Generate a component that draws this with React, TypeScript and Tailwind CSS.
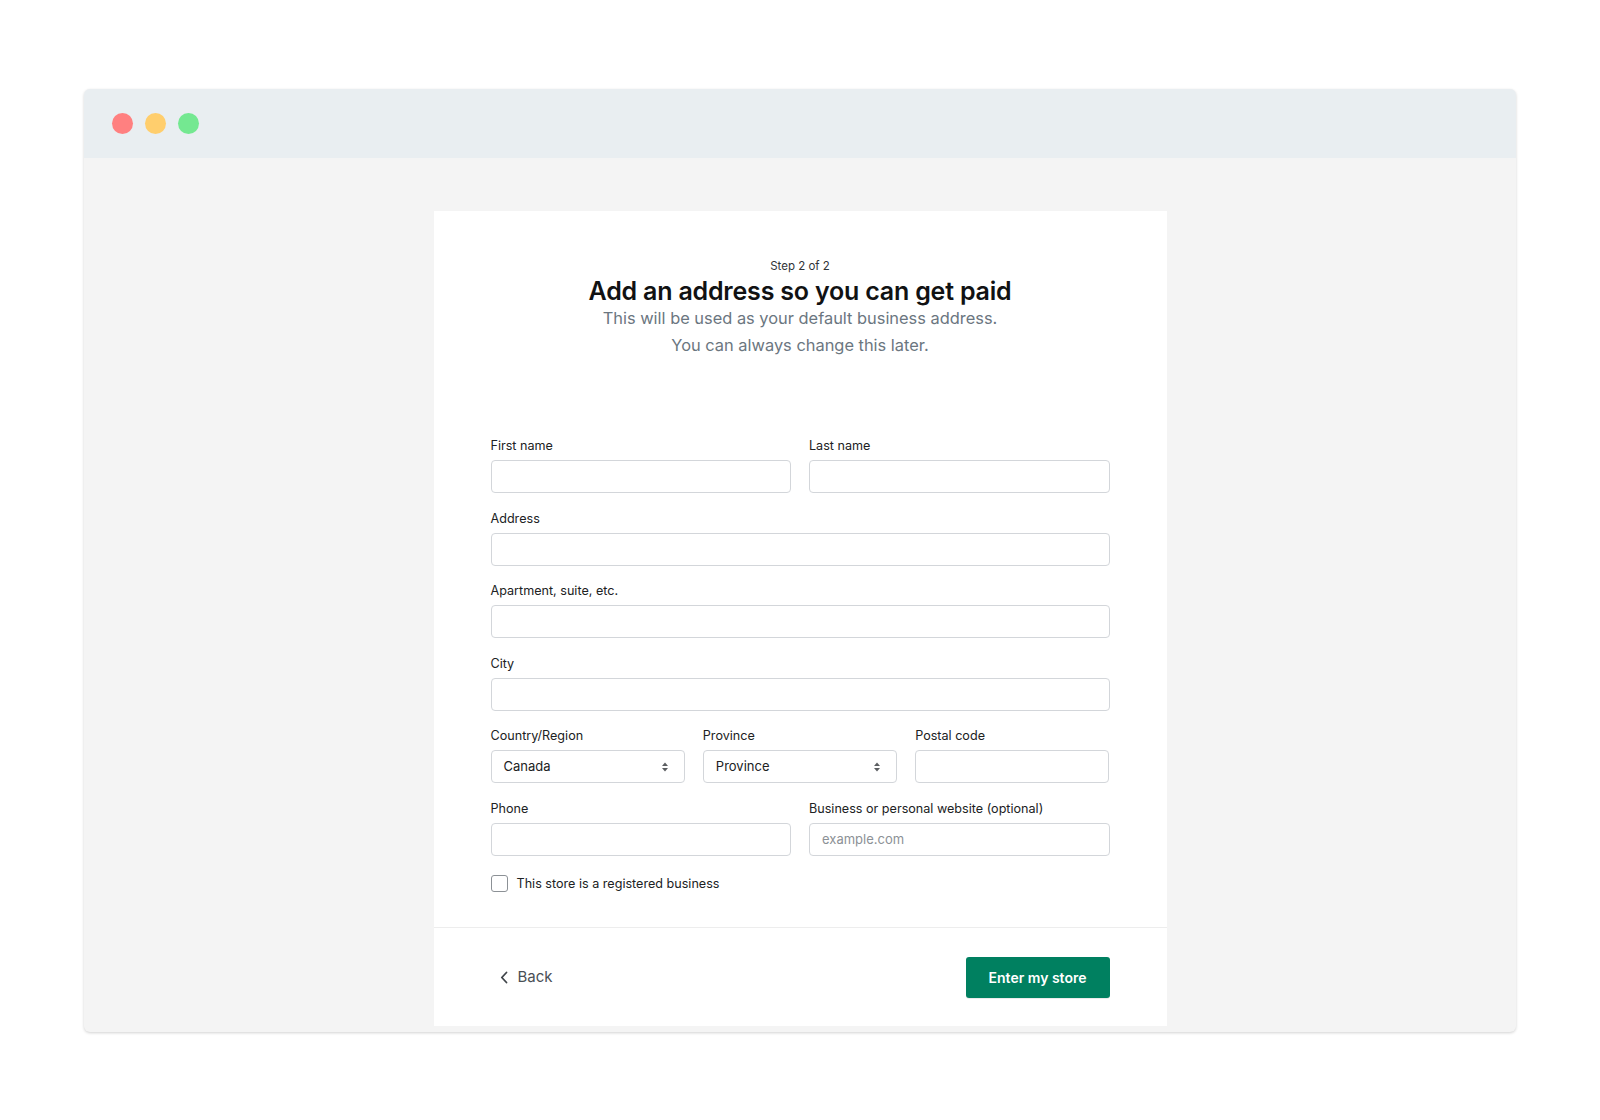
import React from "react";

const font = { fontFamily: "Inter, 'Noto Sans', sans-serif" };

const Label = ({ children }: { children: React.ReactNode }) => (
  <label className="mb-[5px] block text-[12.6px] leading-[18px] text-[#202223]">{children}</label>
);

const Input = ({ placeholder }: { placeholder?: string }) => (
  <input
    placeholder={placeholder}
    className="block h-[33px] w-full rounded-[4px] border border-[#d3d6da] bg-white px-3 text-[13px] text-[#202223] outline-none placeholder:text-[#8c9196]"
  />
);

const Field = ({ label, placeholder }: { label: string; placeholder?: string }) => (
  <div>
    <Label>{label}</Label>
    <Input placeholder={placeholder} />
  </div>
);

const Select = ({ label, value }: { label: string; value: string }) => (
  <div>
    <Label>{label}</Label>
    <div className="flex h-[33px] w-full items-center justify-between rounded-[4px] border border-[#d3d6da] bg-white pl-3 pr-[15px] text-[13px] text-[#202223]">
      <span>{value}</span>
      <svg width="8" height="12" viewBox="0 0 8 12" className="text-[#5c5f62]">
        <path d="M4 1.5 7 5H1z" fill="currentColor" />
        <path d="M4 10.5 7 7H1z" fill="currentColor" />
      </svg>
    </div>
  </div>
);

export default function App() {
  return (
    <div className="min-h-[1120px] bg-white pt-[89px]" style={font}>
      <div className="mx-auto flex h-[943px] w-[1432px] flex-col overflow-hidden rounded-[6px] bg-[#f4f4f4] shadow-[0_1px_3px_rgba(0,0,0,0.18)]">
        <div className="flex h-[69px] shrink-0 items-center gap-[12px] bg-[#e9eef1] pl-[28px]">
          <span className="h-[21px] w-[21px] rounded-full bg-[#ff8080]" />
          <span className="h-[21px] w-[21px] rounded-full bg-[#ffce6d]" />
          <span className="h-[21px] w-[21px] rounded-full bg-[#74e891]" />
        </div>

        <div className="flex flex-1 justify-center pt-[53px]">
          <div className="flex h-[815px] w-[733px] flex-col bg-white">
            <div className="flex-1 px-[57px] pt-[47px]">
              <div className="text-center">
                <div className="text-[11.5px] leading-[16px] text-[#303337]">Step 2 of 2</div>
                <h1 className="mt-[1px] text-[25px] font-semibold leading-[32px] tracking-[-0.2px] text-[#111213]">
                  Add an address so you can get paid
                </h1>
                <p className="mt-[-2px] text-[16.4px] leading-[27px] text-[#6b7680]">
                  This will be used as your default business address.
                  <br />
                  You can always change this later.
                </p>
              </div>

              <div className="mt-[78px] flex flex-col gap-[16.5px]">
                <div className="grid grid-cols-2 gap-[18px]">
                  <Field label="First name" />
                  <Field label="Last name" />
                </div>
                <Field label="Address" />
                <Field label="Apartment, suite, etc." />
                <Field label="City" />
                <div className="grid grid-cols-3 gap-[18px]">
                  <Select label="Country/Region" value="Canada" />
                  <Select label="Province" value="Province" />
                  <Field label="Postal code" />
                </div>
                <div className="grid grid-cols-2 gap-[18px]">
                  <Field label="Phone" />
                  <Field label="Business or personal website (optional)" placeholder="example.com" />
                </div>
              </div>

              <label className="mt-[19px] flex items-center gap-[9px] text-[12.6px] text-[#202223]">
                <span className="h-[17px] w-[17px] rounded-[3px] border border-[#8c9196] bg-white" />
                This store is a registered business
              </label>
            </div>

            <div className="flex h-[99px] items-center justify-between border-t border-[#ededed] px-[57px]">
              <button className="flex items-center gap-[10px] pl-[9px] text-[15px] text-[#4a4f55]">
                <svg width="8" height="13" viewBox="0 0 8 13" fill="none">
                  <path d="M6.5 1.5 1.8 6.5l4.7 5" stroke="#3f4449" strokeWidth="1.8" strokeLinecap="round" strokeLinejoin="round" />
                </svg>
                Back
              </button>
              <button className="h-[41px] w-[144px] rounded-[3px] bg-[#008060] text-[14px] font-semibold text-white shadow-[0_1px_0_rgba(0,0,0,0.08)]">
                Enter my store
              </button>
            </div>
          </div>
        </div>
      </div>
    </div>
  );
}
